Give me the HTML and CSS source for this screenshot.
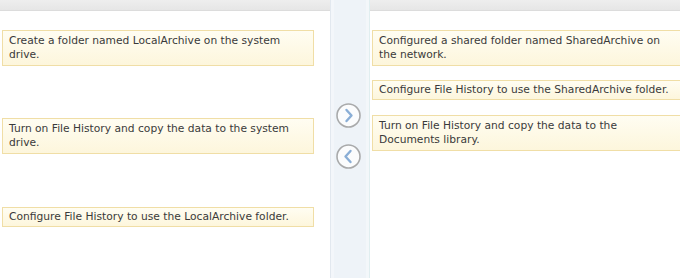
FILE: index.html
```html
<!DOCTYPE html>
<html>
<head>
<meta charset="utf-8">
<link rel="stylesheet" href="styles.css">
</head>
<body>
<div class="page">
  <section class="panel panel-left">
    <div class="panel-head"></div>
    <div class="list list-left">
      <div class="item item-a">Create a folder named LocalArchive on the system drive.</div>
      <div class="item item-b">Turn on File History and copy the data to the system drive.</div>
      <div class="item item-c">Configure File History to use the LocalArchive folder.</div>
    </div>
  </section>
  <div class="middle">
    <div class="controls">
      <button class="circle-btn" aria-label="Move right">
        <svg width="25" height="25" viewBox="0 0 25 25"><circle cx="12.5" cy="12.5" r="11.5" fill="#fbfcfd" stroke="#a9aaab" stroke-width="1.6"/><path d="M10.5 7 L15.5 12.5 L10.5 18" fill="none" stroke="#8aaed6" stroke-width="2.4" stroke-linecap="round" stroke-linejoin="round"/></svg>
      </button>
      <button class="circle-btn" aria-label="Move left">
        <svg width="25" height="25" viewBox="0 0 25 25"><circle cx="12.5" cy="12.5" r="11.5" fill="#fbfcfd" stroke="#a9aaab" stroke-width="1.6"/><path d="M14.5 7 L9.5 12.5 L14.5 18" fill="none" stroke="#8aaed6" stroke-width="2.4" stroke-linecap="round" stroke-linejoin="round"/></svg>
      </button>
    </div>
  </div>
  <section class="panel panel-right">
    <div class="panel-head"></div>
    <div class="list list-right">
      <div class="item item-d">Configured a shared folder named SharedArchive on the network.</div>
      <div class="item item-e">Configure File History to use the SharedArchive folder.</div>
      <div class="item item-f">Turn on File History and copy the data to the Documents library.</div>
    </div>
  </section>
</div>
</body>
</html>
```
FILE: styles.css
```css
* { box-sizing: border-box; }
html, body { margin: 0; padding: 0; background: #ffffff; }
body {
  font-family: "DejaVu Sans", Verdana, sans-serif;
  font-size: 10.7px;
  color: #3a3a3a;
}
.page {
  display: flex;
  width: 680px;
  height: 278px;
  overflow: hidden;
}
.panel { display: flex; flex-direction: column; background: #fff; }
.panel-left { width: 330px; }
.panel-right { flex: 1; }
.panel-head {
  height: 11px;
  background: linear-gradient(#eeeeee, #e6e6e6);
  border-bottom: 1px solid #dcdcdc;
}
.list { display: flex; flex-direction: column; }
.list-left { padding: 19px 16px 0 2px; }
.list-right { padding: 19px 0 0 2px; }
.item {
  background: linear-gradient(#fffdf2, #fdf6dc);
  border: 1px solid #f0dea6;
  padding: 3px 6px 3px 6px;
  line-height: 14px;
}
.panel-right .item { border-right: none; }
.item-b { margin-top: 52px; }
.item-c { margin-top: 53px; padding-top: 2px; padding-bottom: 2px; }
.item-e { margin-top: 14px; padding-top: 2px; padding-bottom: 2px; }
.item-f { margin-top: 15px; }
.panel-left .item { padding-right: 19px; }
.panel-right .item-d, .panel-right .item-f { padding-right: 11px; }
.middle {
  width: 40px;
  background: #eef3f8;
  border-left: 1px solid #e2e8ef;
  border-right: 1px solid #e0eef0;
  display: flex;
  justify-content: center;
  box-shadow: inset 3px 0 0 #f3f6fa, inset -3px 0 0 #f3f7fa;
}
.controls {
  display: flex;
  flex-direction: column;
  gap: 16px;
  padding-top: 103px;
  padding-right: 4px;
}
.circle-btn {
  width: 25px;
  height: 25px;
  padding: 0;
  border: none;
  background: none;
  display: block;
  cursor: pointer;
}
.circle-btn svg { display: block; }
```
